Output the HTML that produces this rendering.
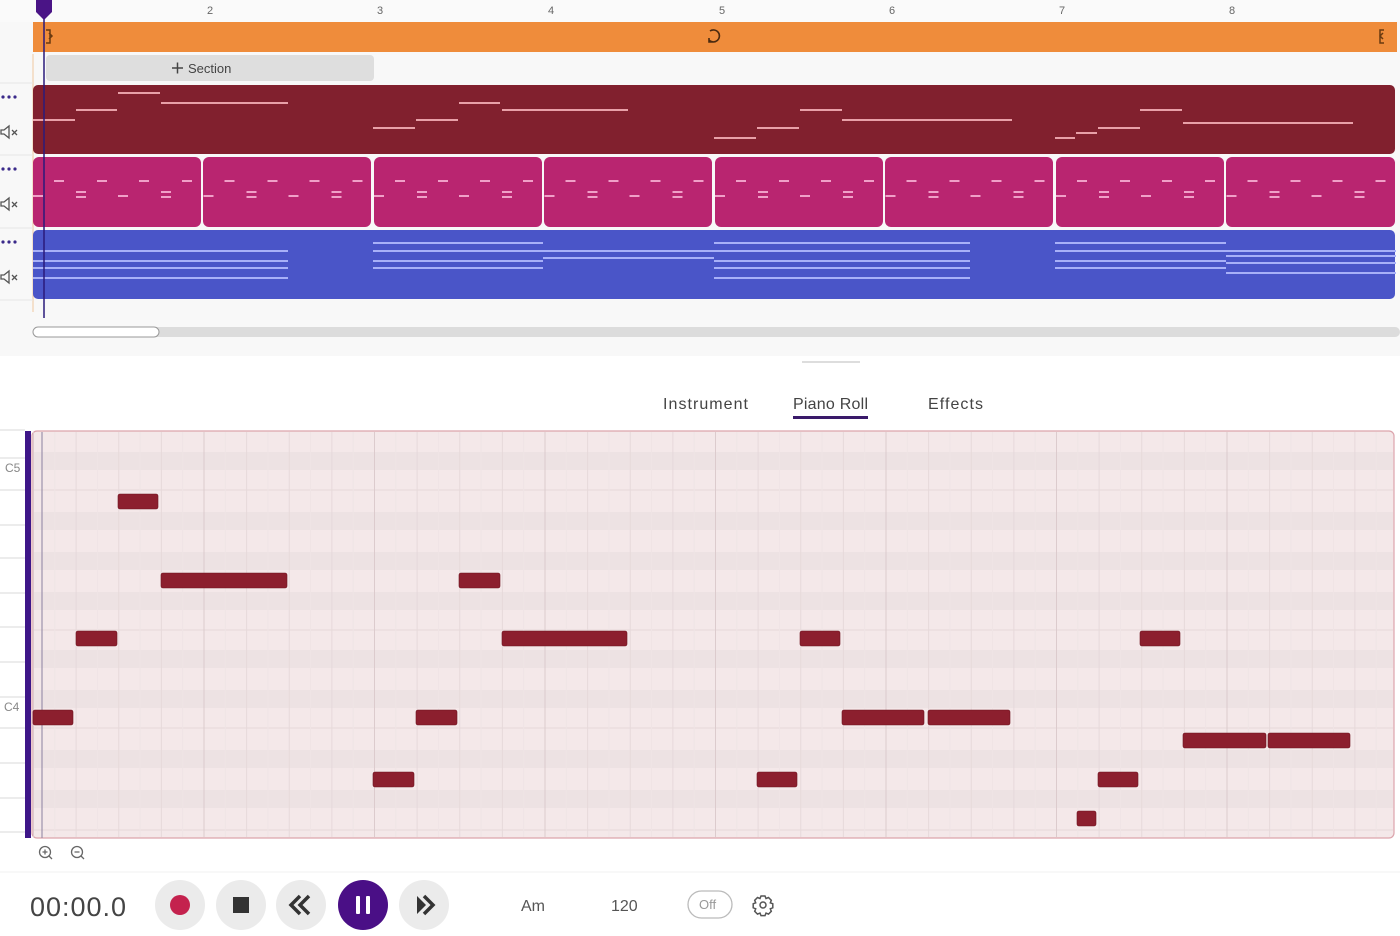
<!DOCTYPE html>
<html><head><meta charset="utf-8"><style>
body{margin:0;width:1400px;height:936px;overflow:hidden;background:#fff;font-family:"Liberation Sans",sans-serif;}
svg{display:block}
</style></head><body>
<svg width="1400" height="936" viewBox="0 0 1400 936" xmlns="http://www.w3.org/2000/svg" font-family="Liberation Sans, sans-serif">
<defs>
<pattern id="vg" x="33" y="0" width="42.625" height="10" patternUnits="userSpaceOnUse"><line x1="0.5" y1="0" x2="0.5" y2="10" stroke="#e6d9da" stroke-width="1"/><line x1="21.8" y1="0" x2="21.8" y2="10" stroke="#efe4e5" stroke-width="1"/></pattern>
<pattern id="bg" x="33" y="0" width="170.5" height="10" patternUnits="userSpaceOnUse"><line x1="0.5" y1="0" x2="0.5" y2="10" stroke="#dccbcd" stroke-width="1"/></pattern>
</defs>
<rect x="0" y="0" width="1400" height="356" fill="#f8f8f8"/>
<rect x="0" y="0" width="1400" height="22" fill="#fafafa"/>
<g font-size="11" fill="#666">
<text x="207" y="14">2</text><text x="377" y="14">3</text><text x="548" y="14">4</text><text x="719" y="14">5</text><text x="889" y="14">6</text><text x="1059" y="14">7</text><text x="1229" y="14">8</text>
</g>
<rect x="33" y="22" width="1364" height="30" fill="#ef8c3b"/>
<path d="M46 30h4v13h-4M49 33l3 3-3 3" stroke="#6a3a10" stroke-width="1.5" fill="none"/>
<path d="M1384 30h-4v13h4M1383 33l-3 3 3 3" stroke="#6a3a10" stroke-width="1.5" fill="none"/>
<path d="M710 31a6 6 0 1 1 -1 9M709 38v4h4" stroke="#4a2a10" stroke-width="1.6" fill="none"/>
<rect x="46" y="55" width="328" height="26" rx="4" fill="#dedede"/>
<text x="188" y="73" font-size="13" fill="#444">Section</text>
<path d="M172 68h11M177.5 62.5v11" stroke="#444" stroke-width="1.5"/>
<line x1="33" y1="54" x2="33" y2="312" stroke="#f0c8a0" stroke-width="1"/>
<line x1="0" y1="83" x2="33" y2="83" stroke="#e6e6e6"/>
<line x1="0" y1="155" x2="33" y2="155" stroke="#e6e6e6"/>
<line x1="0" y1="228" x2="33" y2="228" stroke="#e6e6e6"/>
<line x1="0" y1="300" x2="33" y2="300" stroke="#e6e6e6"/>
<g fill="#3a2a8a"><circle cx="3" cy="97" r="1.6"/><circle cx="9" cy="97" r="1.6"/><circle cx="15" cy="97" r="1.6"/>
<circle cx="3" cy="169" r="1.6"/><circle cx="9" cy="169" r="1.6"/><circle cx="15" cy="169" r="1.6"/>
<circle cx="3" cy="242" r="1.6"/><circle cx="9" cy="242" r="1.6"/><circle cx="15" cy="242" r="1.6"/></g>
<g stroke="#555" stroke-width="1.3" fill="none">
<path d="M1 130h3l5-4v12l-5-4h-3zM12 130l5 5M17 130l-5 5"/>
<path d="M1 202h3l5-4v12l-5-4h-3zM12 202l5 5M17 202l-5 5"/>
<path d="M1 275h3l5-4v12l-5-4h-3zM12 275l5 5M17 275l-5 5"/>
</g>
<rect x="33" y="85" width="1362" height="69" rx="5" fill="#81202e"/>
<g stroke="#e8a0a8" stroke-width="2">
<path d="M33 120h42M76 110h41M118 93h42M161 103h127"/>
<path d="M373 128h42M416 120h42M459 103h41M502 110h126"/>
<path d="M714 138h42M757 128h42M800 110h42M842 120h170"/>
<path d="M1055 138h20M1076 133h21M1098 128h42M1140 110h42M1183 123h170"/>
</g>
<g fill="#b92570">
<rect x="33" y="157" width="168" height="70" rx="6"/><rect x="203" y="157" width="168" height="70" rx="6"/><rect x="374" y="157" width="168" height="70" rx="6"/><rect x="544" y="157" width="168" height="70" rx="6"/><rect x="715" y="157" width="168" height="70" rx="6"/><rect x="885" y="157" width="168" height="70" rx="6"/><rect x="1056" y="157" width="168" height="70" rx="6"/><rect x="1226" y="157" width="169" height="70" rx="6"/>
</g>
<g id="pd" stroke="#f0a0c8" stroke-width="2">
<path d="M54 181h10M97 181h10M139 181h10M182 181h10M33 196h10M76 192h10M76 197h10M118 196h10M161 192h10M161 197h10"/>
</g>
<use href="#pd" x="170.5"/><use href="#pd" x="341"/><use href="#pd" x="511.5"/><use href="#pd" x="682"/><use href="#pd" x="852.5"/><use href="#pd" x="1023"/><use href="#pd" x="1193.5"/>
<rect x="33" y="230" width="1362" height="69" rx="5" fill="#4a55c8"/>
<g stroke="#a8b0f8" stroke-width="2">
<path d="M33 251h255M33 261h255M33 268h255M33 278h255"/>
<path d="M373 243h170M373 251h170M373 261h170M373 268h170"/>
<path d="M543 258h171M543 251h171M714 243h256M714 251h256M714 261h256M714 268h256M714 278h256"/>
<path d="M1055 243h171M1055 251h171M1055 261h171M1055 268h171M1226 251h170M1226 256h170M1226 263h170M1226 273h170"/>
</g>
<line x1="44" y1="10" x2="44" y2="318" stroke="#2a1a7a" stroke-width="1.5"/>
<path d="M36 0h16v12l-8 8-8-8z" fill="#4a1486"/>
<rect x="33" y="327" width="1367" height="10" rx="5" fill="#dcdcdc"/>
<rect x="33" y="327" width="126" height="10" rx="5" fill="#fff" stroke="#999" stroke-width="1"/>
<rect x="802" y="361" width="58" height="2" fill="#ddd"/>
<g font-size="16" fill="#444"><text x="663" y="409" textLength="85">Instrument</text><text x="793" y="409" textLength="75">Piano Roll</text><text x="928" y="409" textLength="55">Effects</text></g>
<rect x="793" y="416" width="75" height="3" fill="#3a1a6a"/>
<rect x="32" y="431" width="1362" height="407" rx="5" fill="#f4e8e9" stroke="#dca4ac" stroke-width="1.2"/>
<g fill="#ede2e3">
<rect x="33" y="452" width="1360" height="18"/><rect x="33" y="512" width="1360" height="18"/><rect x="33" y="552" width="1360" height="18"/><rect x="33" y="592" width="1360" height="18"/><rect x="33" y="650" width="1360" height="18"/><rect x="33" y="690" width="1360" height="18"/><rect x="33" y="750" width="1360" height="18"/><rect x="33" y="790" width="1360" height="18"/>
</g>
<g stroke="#e6d8d9" stroke-width="1"><path d="M33 490h1360M33 630h1360M33 728h1360M33 830h1360"/></g>
<rect x="33" y="432" width="1360" height="405" fill="url(#vg)"/>
<rect x="33" y="432" width="1360" height="405" fill="url(#bg)"/>
<line x1="42" y1="432" x2="42" y2="838" stroke="#8a80a0" stroke-width="1"/>
<rect x="25" y="431" width="6" height="407" fill="#3e1688"/>
<g stroke="#d8d8d8"><path d="M0 430h25M0 458h25M0 490h25M0 525h25M0 558h25M0 593h25M0 627h25M0 662h25M0 697h25M0 728h25M0 763h25M0 798h25M0 832h25"/></g>
<g font-size="12" fill="#888"><text x="5" y="472">C5</text><text x="4" y="711">C4</text></g>
<g fill="#8c1f2e" stroke="#6e1420" stroke-width="0.6">
<rect x="33" y="710" width="40" height="15" rx="2"/>
<rect x="76" y="631" width="41" height="15" rx="2"/>
<rect x="118" y="494" width="40" height="15" rx="2"/>
<rect x="161" y="573" width="126" height="15" rx="2"/>
<rect x="373" y="772" width="41" height="15" rx="2"/>
<rect x="416" y="710" width="41" height="15" rx="2"/>
<rect x="459" y="573" width="41" height="15" rx="2"/>
<rect x="502" y="631" width="125" height="15" rx="2"/>
<rect x="757" y="772" width="40" height="15" rx="2"/>
<rect x="800" y="631" width="40" height="15" rx="2"/>
<rect x="842" y="710" width="82" height="15" rx="2"/>
<rect x="928" y="710" width="82" height="15" rx="2"/>
<rect x="1077" y="811" width="19" height="15" rx="2"/>
<rect x="1098" y="772" width="40" height="15" rx="2"/>
<rect x="1140" y="631" width="40" height="15" rx="2"/>
<rect x="1183" y="733" width="83" height="15" rx="2"/>
<rect x="1268" y="733" width="82" height="15" rx="2"/>
</g>
<g stroke="#666" stroke-width="1.3" fill="none">
<circle cx="45" cy="852" r="5.5"/><path d="M49 856l3 3M42.5 852h5M45 849.5v5"/>
<circle cx="77" cy="852" r="5.5"/><path d="M81 856l3 3M74.5 852h5"/>
</g>
<line x1="0" y1="872" x2="1400" y2="872" stroke="#f2f2f2"/>
<text x="30" y="916" font-size="27" fill="#444" textLength="96">00:00.0</text>
<circle cx="180" cy="905" r="25" fill="#ebebeb"/><circle cx="180" cy="905" r="10" fill="#c4224e"/>
<circle cx="241" cy="905" r="25" fill="#ebebeb"/><rect x="233" y="897" width="16" height="16" fill="#333"/>
<circle cx="301" cy="905" r="25" fill="#ebebeb"/><path d="M300 896l-9 9 9 9M309 896l-9 9 9 9" fill="none" stroke="#333" stroke-width="3.5"/>
<circle cx="363" cy="905" r="25" fill="#4a0f86"/><rect x="356" y="896" width="4" height="18" rx="1" fill="#fff"/><rect x="366" y="896" width="4" height="18" rx="1" fill="#fff"/>
<circle cx="424" cy="905" r="25" fill="#ebebeb"/><path d="M417 896l9 9-9 9z" fill="#333"/><path d="M424 896l9 9-9 9" fill="none" stroke="#333" stroke-width="3.5"/>
<g font-size="16" fill="#555"><text x="521" y="911">Am</text><text x="611" y="911">120</text></g>
<rect x="688" y="891" width="44" height="27" rx="13.5" fill="#fff" stroke="#bbb" stroke-width="1.3"/>
<text x="699" y="909" font-size="13" fill="#999">Off</text>
<g transform="translate(763 905)" fill="none" stroke="#555" stroke-width="1.5">
<path d="M-2 -9h4l1 2.5 2.5 -1 2.8 2.8 -1 2.5 2.5 1v4l-2.5 1 1 2.5 -2.8 2.8 -2.5 -1 -1 2.5h-4l-1 -2.5 -2.5 1 -2.8 -2.8 1 -2.5 -2.5 -1v-4l2.5 -1 -1 -2.5 2.8 -2.8 2.5 1z"/>
<circle r="3"/></g>
</svg>
</body></html>
